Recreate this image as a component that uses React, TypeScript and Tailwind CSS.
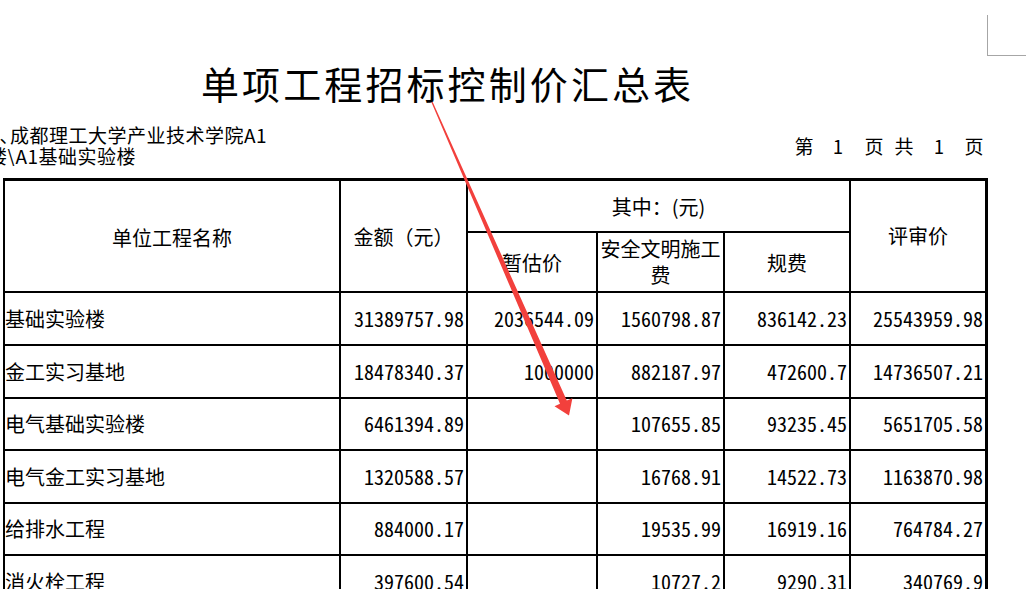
const rows = [
  ["基础实验楼", "31389757.98", "2036544.09", "1560798.87", "836142.23", "25543959.98"],
  ["金工实习基地", "18478340.37", "1000000", "882187.97", "472600.7", "14736507.21"],
  ["电气基础实验楼", "6461394.89", "", "107655.85", "93235.45", "5651705.58"],
  ["电气金工实习基地", "1320588.57", "", "16768.91", "14522.73", "1163870.98"],
  ["给排水工程", "884000.17", "", "19535.99", "16919.16", "764784.27"],
  ["消火栓工程", "397600.54", "", "10727.2", "9290.31", "340769.9"],
];

const cjk = "font-['Noto_Sans_CJK_SC',sans-serif]";
const num =
  "font-['Noto_Sans_Mono_CJK_SC','Noto_Sans_CJK_SC',monospace] [font-feature-settings:'hwid']";

const Arrow = () => (
  <svg
    className="pointer-events-none absolute inset-0 h-full w-full"
    viewBox="0 0 1026 589"
  >
    <polygon
      points="432.6,101.7 566.8,400.6 572.4,398.2 569,415.5 554.5,406.2 560,403.7 431.4,102.3"
      fill="#f2403c"
    />
  </svg>
);

function HeadCell({ className = "", children }: { className?: string; children: React.ReactNode }) {
  return (
    <div className={`flex items-center justify-center bg-white text-center text-[20px] ${className}`}>
      {children}
    </div>
  );
}

export default function App() {
  return (
    <div className={`relative h-[589px] w-full overflow-hidden bg-white text-black ${cjk}`}>
      {/* page corner mark */}
      <div className="flex h-[56px] justify-end pt-[15px]">
        <div className="h-[41px] w-[39px] border-b border-l border-[#a6a6a6]" />
      </div>

      <h1 className="mt-[8px] pl-[201px] text-[38px] leading-[38px] tracking-[3.1px]">
        单项工程招标控制价汇总表
      </h1>

      <div className="mt-[22px] flex items-center text-[19px] leading-[21px]">
        <div className="w-[600px] overflow-hidden tracking-[0.5px]">
          <div className="whitespace-nowrap">､成都理工大学产业技术学院A1</div>
          <div className="-ml-[12px] whitespace-nowrap">楼\A1基础实验楼</div>
        </div>
        <div className="ml-[194px] flex text-[19px]">
          <span className="w-[20px] text-center">第</span>
          <span className={`ml-[14px] w-[20px] text-center ${num}`}>1</span>
          <span className="ml-[16px] w-[20px] text-center">页</span>
          <span className="ml-[10px] w-[20px] text-center">共</span>
          <span className={`ml-[15px] w-[20px] text-center ${num}`}>1</span>
          <span className="ml-[15px] w-[20px] text-center">页</span>
        </div>
      </div>

      <div className="ml-[3px] mt-[12px] grid w-[985px] grid-cols-[334px_125px_128px_125px_124px_134px] grid-rows-[50px_58px_51px_51px_50px_51px_50px_51px] gap-[2px] bg-black pl-[2px] pr-[3px] pt-[3px]">
        <HeadCell className="col-start-1 row-span-2 row-start-1 pt-[4px]">单位工程名称</HeadCell>
        <HeadCell className="col-start-2 row-span-2 row-start-1 pt-[2px]">金额（元）</HeadCell>
        <HeadCell className="col-span-3 col-start-3 row-start-1 pt-[2px]">其中：(元)</HeadCell>
        <HeadCell className="col-start-6 row-span-2 row-start-1">评审价</HeadCell>
        <HeadCell className="col-start-3 row-start-2 pt-[2px]">暂估价</HeadCell>
        <HeadCell className="col-start-4 row-start-2 leading-[26px]">安全文明施工费</HeadCell>
        <HeadCell className="col-start-5 row-start-2 pt-[2px]">规费</HeadCell>

        {rows.map((r) => (
          <div key={r[0]} className="contents">
            <div className="flex items-center bg-white text-[20px] whitespace-nowrap">{r[0]}</div>
            {r.slice(1).map((v, i) => (
              <div
                key={i}
                className={`flex items-center justify-end bg-white pr-[2px] text-[20px] whitespace-nowrap ${num}`}
              >
                {v}
              </div>
            ))}
          </div>
        ))}
      </div>

      <Arrow />
    </div>
  );
}
